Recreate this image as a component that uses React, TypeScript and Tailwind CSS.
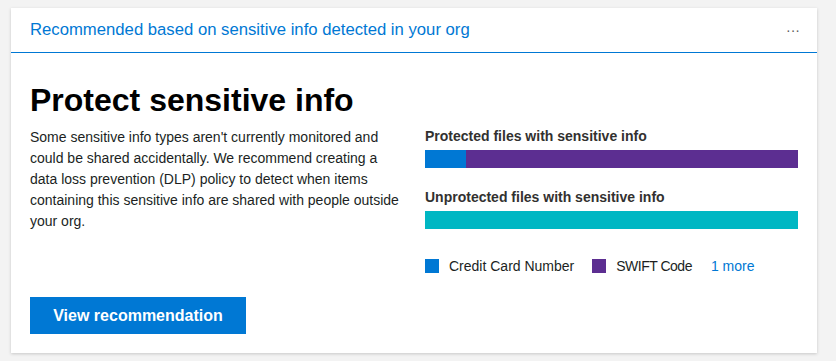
export default function App() {
  return (
    <div className="min-h-screen w-full bg-[#f3f3f3] pt-[8px] pl-[11px] pr-[19px] font-['Segoe_UI','Liberation_Sans',sans-serif]">
      <div className="w-[806px] h-[345px] bg-white shadow-[0_1px_3px_rgba(0,0,0,0.18)] flex flex-col">
        {/* header */}
        <div className="h-[45px] border-b border-[#0078d4] flex items-center justify-between pl-[19px] pr-[17px]">
          <span className="text-[16.7px] text-[#0078d4]">Recommended based on sensitive info detected in your org</span>
          <span className="text-[14px] text-[#605e5c] leading-none">···</span>
        </div>

        <div className="flex-1 flex flex-col px-[19px] pt-[25px]">
          <h1 className="text-[32px] leading-[44px] font-bold text-black">Protect sensitive info</h1>

          <div className="grid grid-cols-[375px_373px] gap-x-[20px] mt-[5px]">
            <p className="text-[14px] leading-[21px] text-[#201f1e]">
              Some sensitive info types aren't currently monitored and could be shared accidentally. We recommend creating a
              data loss prevention (DLP) policy to detect when items containing this sensitive info are shared with people outside
              your org.
            </p>

            <div className="flex flex-col">
              <div className="text-[14px] leading-[20px] font-semibold text-[#323130] -mt-[1px]">Protected files with sensitive info</div>
              <div className="flex h-[18px] mt-[4px]">
                <div className="w-[41px] bg-[#0078d4]" />
                <div className="flex-1 bg-[#5c2e91]" />
              </div>
              <div className="text-[14px] leading-[20px] font-semibold text-[#323130] mt-[19px]">Unprotected files with sensitive info</div>
              <div className="h-[18px] mt-[4px] bg-[#00b7c3]" />

              <div className="flex items-center mt-[27px] text-[14px] leading-[20px] text-[#201f1e]">
                <span className="w-[14px] h-[14px] bg-[#0078d4] mr-[10px]" />
                <span>Credit Card Number</span>
                <span className="w-[14px] h-[14px] bg-[#5c2e91] ml-[18px] mr-[10px]" />
                <span className="tracking-[-0.5px]">SWIFT Code</span>
                <span className="ml-[19px] text-[#0078d4]">1 more</span>
              </div>
            </div>
          </div>

          <button className="mt-auto mb-[19px] w-[216px] h-[37px] bg-[#0078d4] text-white text-[16px] font-semibold">
            View recommendation
          </button>
        </div>
      </div>
    </div>
  );
}
